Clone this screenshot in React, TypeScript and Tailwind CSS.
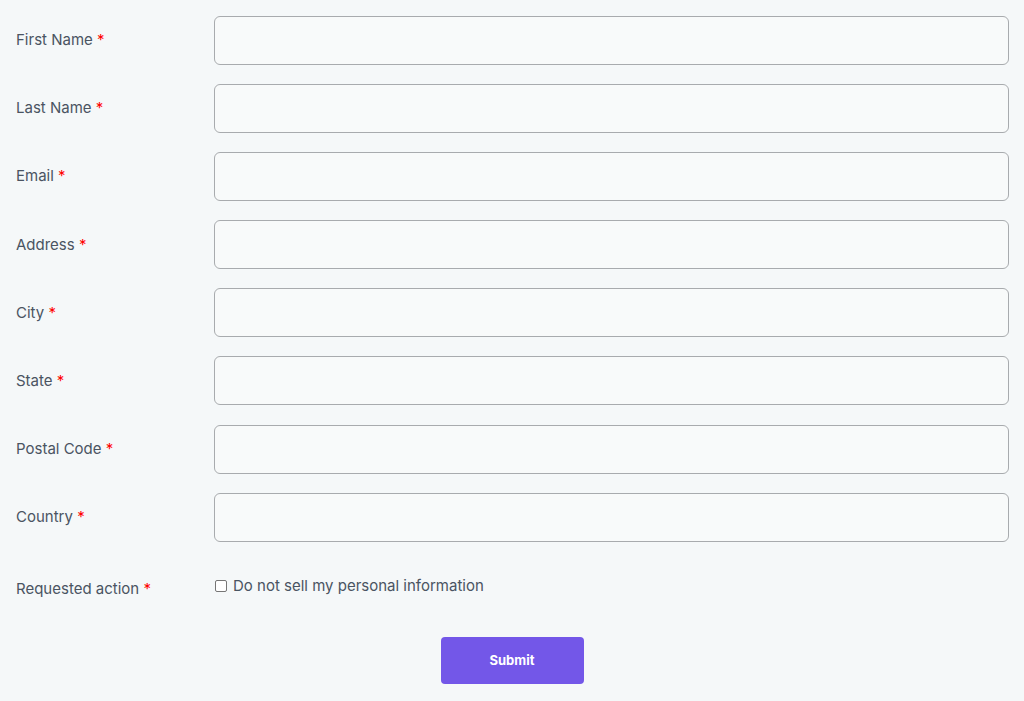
import React from "react";

const fields = ["First Name", "Last Name", "Email", "Address", "City", "State", "Postal Code", "Country"];

export default function App() {
  return (
    <div className="min-h-[701px] w-full bg-[#f5f8f9] pl-[16px] pr-[15px] pt-[16px]" style={{ fontFamily: "Inter, 'Noto Sans', sans-serif" }}>
      <div className="flex flex-col gap-[19.1px]">
        {fields.map((f) => (
          <div key={f} className="flex items-center">
            <label className="w-[198px] shrink-0 text-[15px] text-[#4a5462]">
              {f} <span className="text-[#ff0000]">*</span>
            </label>
            <input className="h-[49px] flex-1 rounded-[6px] border border-[#a8abae] bg-[#f8fafa] px-3 outline-none" />
          </div>
        ))}
      </div>
      <div className="mt-[35px] flex items-start">
        <label className="w-[198px] shrink-0 pt-[1px] text-[15px] text-[#4a5462]">
          Requested action <span className="text-[#ff0000]">*</span>
        </label>
        <label className="-mt-[2px] flex items-center gap-[6px] text-[15px] text-[#4a5462]">
          <span className="ml-[1px] inline-block h-[12px] w-[12px] rounded-[2px] border border-[#767676] bg-white" />
          Do not sell my personal information
        </label>
      </div>
      <div className="mt-[37px] flex justify-center pr-[1px]">
        <button className="h-[47px] w-[143px] rounded-[4px] bg-[#7357e8] text-[13px] font-bold text-white">Submit</button>
      </div>
    </div>
  );
}
